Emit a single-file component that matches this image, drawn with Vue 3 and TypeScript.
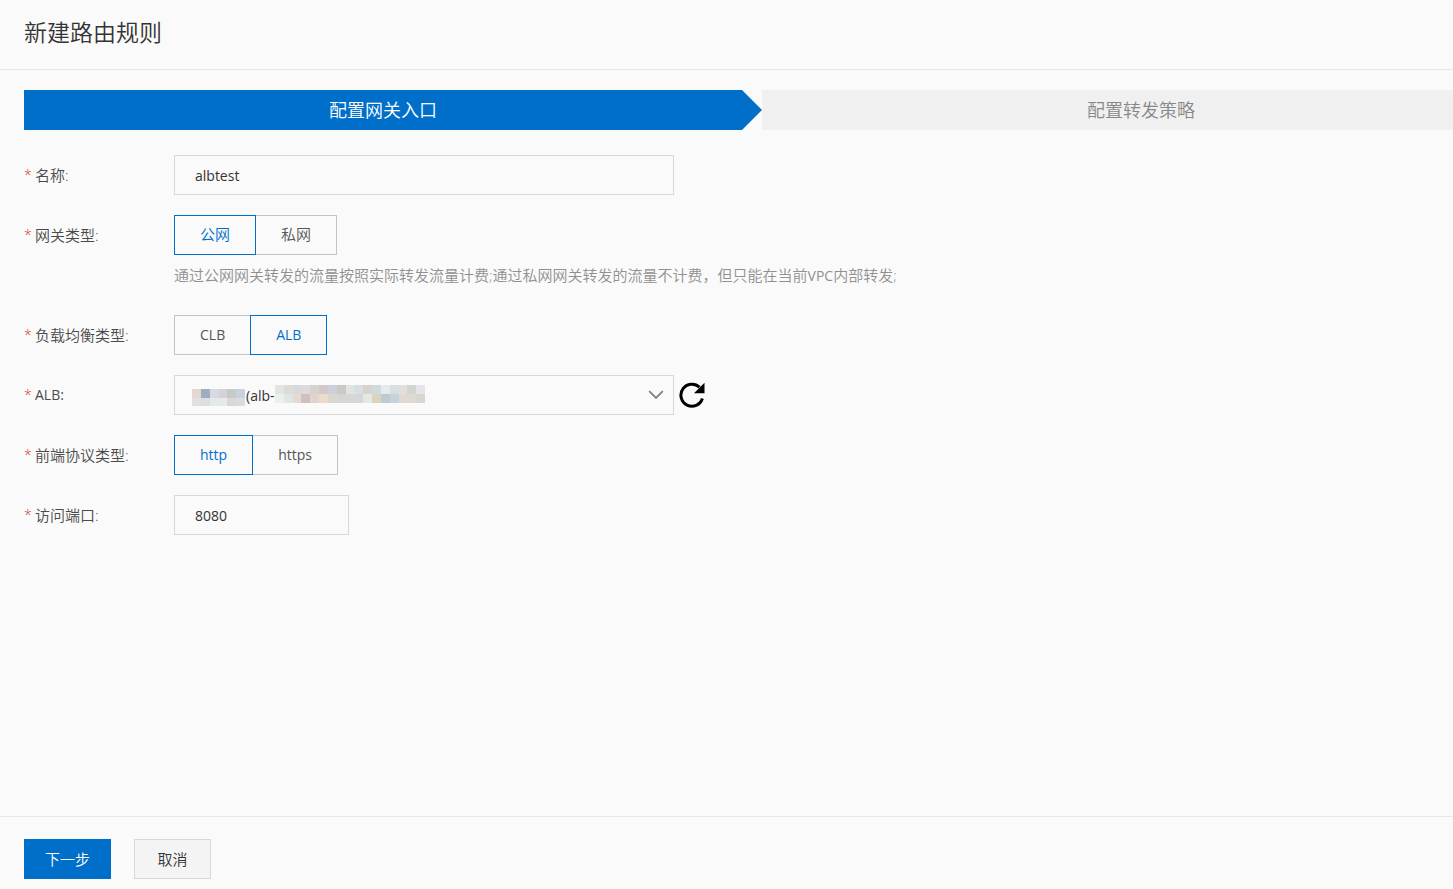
<script setup lang="ts">
import { ref } from 'vue'

interface Choice {
  value: string
  label: string
}

const name = ref('albtest')
const network = ref('public')
const balancer = ref('alb')
const instance = ref('alb')
const protocol = ref('http')
const port = ref('8080')

const networks: Choice[] = [
  { value: 'public', label: '公网' },
  { value: 'private', label: '私网' },
]
const balancers: Choice[] = [
  { value: 'clb', label: 'CLB' },
  { value: 'alb', label: 'ALB' },
]
const protocols: Choice[] = [
  { value: 'http', label: 'http' },
  { value: 'https', label: 'https' },
]

// Colour cells that mask the private part of the instance name and id
const nameMask: string[][] = [
  ['#e3d8d2', '#9eadc3', '#d8dae0', '#d2d4d3', '#c8c9c9', '#c8d2dc'],
  ['#e0e0e0', '#d8dfe5', '#e6e9eb', '#e8eaea', '#ddd7d3', '#d9dbde'],
]
const idMask: string[][] = [
  ['#e3e5df', '#dfdcd5', '#d7d9de', '#ded9dc', '#d6d2cf', '#d4c8ca', '#cdd0db', '#cbc8c5', '#e2e4e1', '#d7dfe1', '#d8d2cc', '#d0dadb', '#e5eaef', '#d7dfe2', '#e2dfda', '#d1d5d3', '#e7e3e9'],
  ['#edf0ea', '#dce8e5', '#e8d9d0', '#cec0c2', '#e2d3cd', '#eddbc9', '#d8d8d0', '#d3d6d1', '#d5d6d5', '#d5d6d8', '#e0e9e8', '#ddd1bf', '#bec9d2', '#c9d2d8', '#e1d7d3', '#dfd9d2', '#d7d6d1'],
]
</script>

<template>
  <div class="page">
    <header class="head">
      <h1>新建路由规则</h1>
    </header>

    <ol class="steps">
      <li class="step current" aria-current="step">
        <span class="step-text">配置网关入口</span>
        <svg class="arrow" width="20" height="40" viewBox="0 0 20 40" aria-hidden="true">
          <path d="M0 0L20 20L0 40Z" fill="#006fca" />
        </svg>
      </li>
      <li class="step next"><span class="step-text">配置转发策略</span></li>
    </ol>

    <form id="route-form" class="form" @submit.prevent>
      <div class="row">
        <label class="caption" for="name"><i>*</i>名称:</label>
        <input id="name" v-model="name" class="text" type="text" />
      </div>

      <div class="row">
        <span id="network-caption" class="caption"><i>*</i>网关类型:</span>
        <div class="field">
          <div class="group" role="radiogroup" aria-labelledby="network-caption">
            <label v-for="c in networks" :key="c.value" class="choice cjk" :class="{ on: network === c.value }">
              <input v-model="network" type="radio" name="network" :value="c.value" />{{ c.label }}
            </label>
          </div>
          <p class="hint">通过公网网关转发的流量按照实际转发流量计费;通过私网网关转发的流量不计费，但只能在当前<span class="latin">VPC</span>内部转发;</p>
        </div>
      </div>

      <div class="row">
        <span id="balancer-caption" class="caption"><i>*</i>负载均衡类型:</span>
        <div class="group" role="radiogroup" aria-labelledby="balancer-caption">
          <label v-for="c in balancers" :key="c.value" class="choice" :class="{ on: balancer === c.value }">
            <input v-model="balancer" type="radio" name="balancer" :value="c.value" />{{ c.label }}
          </label>
        </div>
      </div>

      <div class="row">
        <label class="caption" for="instance"><i>*</i><span class="latin">ALB:</span></label>
        <div class="select-box">
          <select id="instance" v-model="instance">
            <option value="alb">(alb-</option>
          </select>
          <svg class="mask name-mask" width="53" height="17" viewBox="0 0 6 2" preserveAspectRatio="none" shape-rendering="crispEdges" aria-hidden="true">
            <g v-for="(line, y) in nameMask" :key="y">
              <rect v-for="(c, x) in line" :key="x" :x="x" :y="y" width="1" height="1" :fill="c" />
            </g>
          </svg>
          <svg class="mask id-mask" width="150" height="18" viewBox="0 0 17 2" preserveAspectRatio="none" shape-rendering="crispEdges" aria-hidden="true">
            <g v-for="(line, y) in idMask" :key="y">
              <rect v-for="(c, x) in line" :key="x" :x="x" :y="y" width="1" height="1" :fill="c" />
            </g>
          </svg>
          <svg class="chevron" width="16" height="10" viewBox="0 0 16 10" aria-hidden="true">
            <path d="M1.2 1.2L8 8L14.8 1.2" fill="none" stroke="#808080" stroke-width="1.8" />
          </svg>
        </div>
        <button class="refresh" type="button" aria-label="刷新">
          <svg width="26" height="26" viewBox="0 0 26 26" aria-hidden="true">
            <path d="M20.5 5.2A11 11 0 1 0 23.4 16.5" fill="none" stroke="#000" stroke-width="3" />
            <path d="M25.5 0.8V11.2H15Z" fill="#000" />
          </svg>
        </button>
      </div>

      <div class="row">
        <span id="protocol-caption" class="caption"><i>*</i>前端协议类型:</span>
        <div class="group" role="radiogroup" aria-labelledby="protocol-caption">
          <label v-for="c in protocols" :key="c.value" class="choice" :class="{ on: protocol === c.value }">
            <input v-model="protocol" type="radio" name="protocol" :value="c.value" />{{ c.label }}
          </label>
        </div>
      </div>

      <div class="row">
        <label class="caption" for="port"><i>*</i>访问端口:</label>
        <input id="port" v-model="port" class="text short" type="text" inputmode="numeric" />
      </div>
    </form>

    <footer class="foot">
      <button class="btn primary" type="submit" form="route-form">下一步</button>
      <button class="btn" type="button">取消</button>
    </footer>
  </div>
</template>

<style>
body {
  background: #fafafa;
}
</style>

<style scoped>
.page,
.page * {
  box-sizing: border-box;
}
.page {
  display: flex;
  flex-direction: column;
  min-height: 100vh;
  overflow-x: hidden;
  background: #fafafa;
  color: #333;
  font: 350 15px/40px "Open Sans", "Noto Sans CJK SC", sans-serif;
}
input,
select,
button {
  font-family: inherit;
  font-weight: inherit;
}
.head {
  padding: 17px 24px 22px;
  border-bottom: 1px solid #e8e8e8;
}
h1 {
  margin: 0;
  font-size: 23px;
  font-weight: 350;
  line-height: 30px;
}
.steps {
  display: flex;
  margin: 20px 0 25px;
  padding: 0 0 0 24px;
  list-style: none;
  font-size: 18px;
  text-align: center;
}
.step {
  display: flex;
  flex: 738 1 0;
  height: 40px;
}
.step-text {
  flex: 1;
}
.current .step-text {
  background: #006fca;
  color: #fff;
}
.arrow {
  flex: none;
}
.next {
  flex-grow: 691;
  background: #f0f0f0;
  color: #888;
}
.next .step-text {
  padding-left: 67px;
}
.form {
  display: flex;
  flex: 1;
  flex-direction: column;
  gap: 20px;
  padding: 0 24px 20px;
}
.row {
  display: flex;
  align-items: flex-start;
}
.caption {
  display: flex;
  flex: none;
  align-items: center;
  width: 150px;
  height: 40px;
  color: #4a4a4a;
}
.caption i {
  width: 11px;
  color: #d93026;
  font-style: normal;
  font-size: 14px;
}
.latin {
  font-size: 14px;
  font-weight: 400;
}
.text,
select {
  display: block;
  width: 500px;
  height: 40px;
  margin: 0;
  padding: 0 20px;
  border: 1px solid #d8d8d8;
  border-radius: 0;
  background: transparent;
  color: #333;
  font-size: 14px;
  font-weight: 400;
}
.short {
  width: 175px;
}
.group {
  display: flex;
}
.choice {
  position: relative;
  height: 40px;
  padding: 0 25px;
  border: 1px solid #c4c4c4;
  color: #555;
  font-size: 14px;
  font-weight: 400;
  line-height: 38px;
  cursor: pointer;
}
.choice.cjk {
  font-size: 15px;
  font-weight: 350;
  line-height: 36px;
}
.choice + .choice {
  margin-left: -1px;
}
.choice.on {
  z-index: 1;
  border-color: #006fca;
  color: #006fca;
}
.choice input {
  position: absolute;
  inset: 0;
  margin: 0;
  opacity: 0;
}
.hint {
  height: 40px;
  margin: 0;
  color: #909090;
}
.select-box {
  position: relative;
  height: 40px;
}
select {
  padding-left: 71px;
  appearance: none;
}
.mask,
.chevron {
  position: absolute;
  pointer-events: none;
}
.name-mask {
  left: 18px;
  top: 14px;
}
.id-mask {
  left: 101px;
  top: 10px;
}
.chevron {
  right: 10px;
  top: 15px;
}
.refresh {
  display: flex;
  align-items: center;
  height: 40px;
  margin-left: 5px;
  padding: 0;
  border: 0;
  background: none;
}
.foot {
  display: flex;
  gap: 23px;
  padding: 22px 24px 10px;
  border-top: 1px solid #e8e8e8;
}
.btn {
  min-width: 77px;
  height: 40px;
  padding: 0 20px 2px;
  border: 1px solid #d8d8d8;
  background: #f4f4f4;
  color: #333;
  font-size: 15px;
}
.primary {
  border-color: #006fca;
  background: #006fca;
  color: #fff;
}
</style>
